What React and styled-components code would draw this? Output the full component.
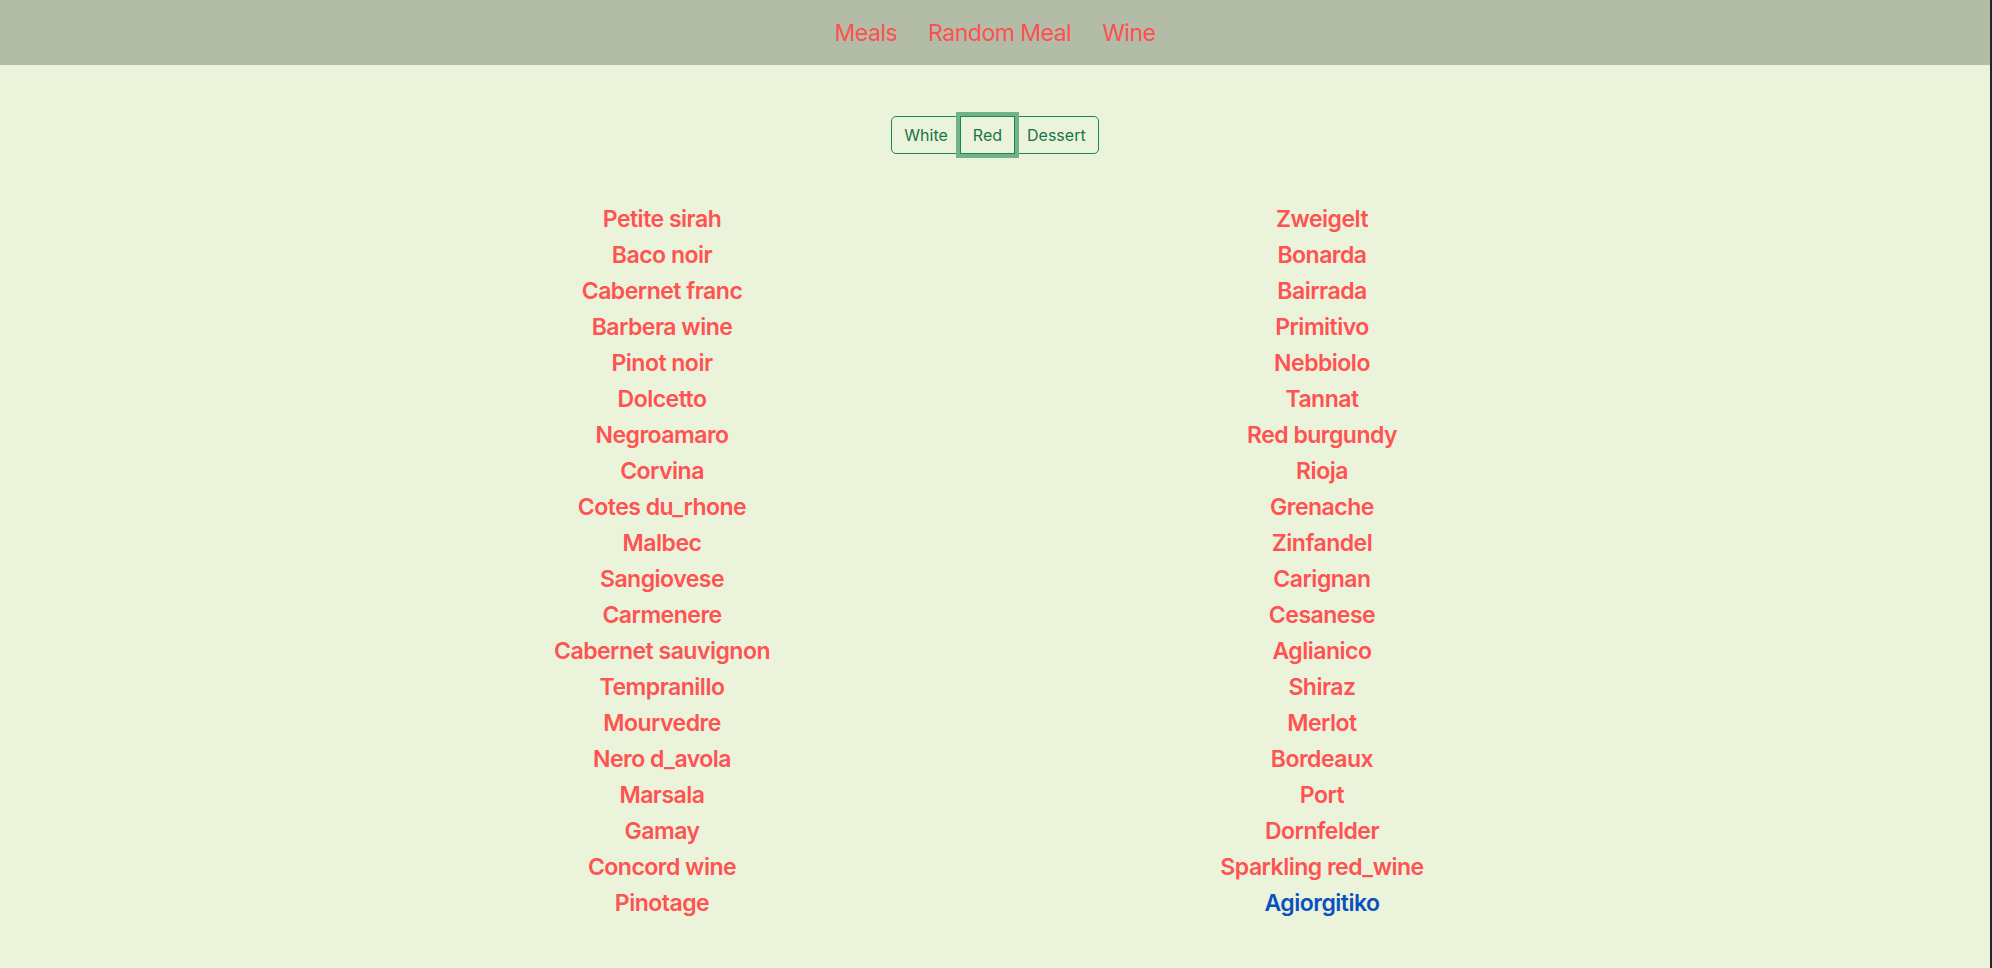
import React, { useState } from "react";
import styled, { createGlobalStyle } from "styled-components";

const leftWines = [
  "Petite sirah",
  "Baco noir",
  "Cabernet franc",
  "Barbera wine",
  "Pinot noir",
  "Dolcetto",
  "Negroamaro",
  "Corvina",
  "Cotes du_rhone",
  "Malbec",
  "Sangiovese",
  "Carmenere",
  "Cabernet sauvignon",
  "Tempranillo",
  "Mourvedre",
  "Nero d_avola",
  "Marsala",
  "Gamay",
  "Concord wine",
  "Pinotage",
];

const rightWines = [
  "Zweigelt",
  "Bonarda",
  "Bairrada",
  "Primitivo",
  "Nebbiolo",
  "Tannat",
  "Red burgundy",
  "Rioja",
  "Grenache",
  "Zinfandel",
  "Carignan",
  "Cesanese",
  "Aglianico",
  "Shiraz",
  "Merlot",
  "Bordeaux",
  "Port",
  "Dornfelder",
  "Sparkling red_wine",
  "Agiorgitiko",
];

const App = () => {
  const [type, setType] = useState("Red");
  // the last one in the list is shown as hovered in the screenshot
  const hovered = "Agiorgitiko";

  return (
    <>
      <GlobalStyle />
      <Page>
        <Nav>
          <NavLink>Meals</NavLink>
          <NavLink>Random Meal</NavLink>
          <NavLink>Wine</NavLink>
        </Nav>
        <Body>
          <Group>
            {["White", "Red", "Dessert"].map((t) => (
              <TypeButton key={t} $focused={type === t} onClick={() => setType(t)}>
                {t}
              </TypeButton>
            ))}
          </Group>
          <Columns>
            <Column>
              {leftWines.map((w) => (
                <Wine key={w} $hover={w === hovered}>{w}</Wine>
              ))}
            </Column>
            <Column>
              {rightWines.map((w) => (
                <Wine key={w} $hover={w === hovered}>{w}</Wine>
              ))}
            </Column>
          </Columns>
        </Body>
      </Page>
    </>
  );
};

export default App;

const GlobalStyle = createGlobalStyle`
  html, body {
    margin: 0;
    padding: 0;
    background: #262626;
  }
  body {
    font-family: Inter, "Noto Sans", sans-serif;
  }
`;

const Page = styled.div`
  min-height: 100vh;
  margin-right: 2px;
  background-color: #ebf4da;
`;

const Nav = styled.nav`
  display: flex;
  justify-content: center;
  align-items: center;
  gap: 31px;
  height: 65px;
  background-color: #b3bca7;
`;

const NavLink = styled.a`
  font-size: 23px;
  letter-spacing: -0.5px;
  color: #ff5050;
  cursor: pointer;
`;

const Body = styled.div`
  display: flex;
  flex-direction: column;
  align-items: center;
  padding-top: 51px;
`;

const Group = styled.div`
  display: inline-flex;
`;

const TypeButton = styled.button`
  position: relative;
  height: 38px;
  padding: 0 12px;
  font-family: Inter, sans-serif;
  font-size: 16px;
  color: #17754a;
  background: transparent;
  border: 1px solid #198754;
  margin-left: -1px;
  cursor: pointer;
  z-index: ${(p) => (p.$focused ? 1 : 0)};
  box-shadow: ${(p) => (p.$focused ? "0 0 0 4px #72b28b" : "none")};
  &:first-child {
    margin-left: 0;
    border-radius: 5px 0 0 5px;
  }
  &:last-child {
    border-radius: 0 5px 5px 0;
  }
`;

const Columns = styled.div`
  display: grid;
  grid-template-columns: 1fr 1fr;
  width: 1320px;
  margin-top: 47px;
  margin-right: 6px;
`;

const Column = styled.div`
  display: flex;
  flex-direction: column;
  align-items: center;
`;

const Wine = styled.div`
  font-size: 23px;
  letter-spacing: -0.5px;
  line-height: 36px;
  font-weight: 600;
  color: ${(p) => (p.$hover ? "#0b50c0" : "#ff5252")};
  cursor: pointer;
`;
